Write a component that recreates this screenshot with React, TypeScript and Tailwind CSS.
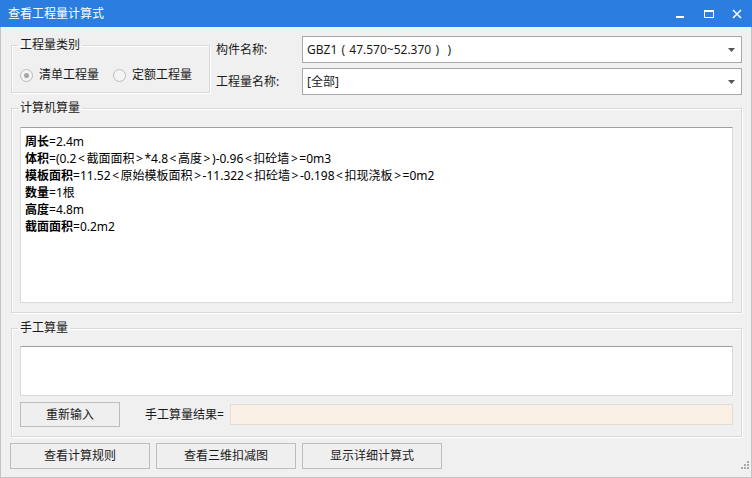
import type { ReactNode } from "react";

function TitleBar() {
  return (
    <div className="flex h-[27px] items-center bg-[#2b7ee0] pl-[8px] text-white">
      <span className="text-[12px] leading-none">查看工程量计算式</span>
      <div className="ml-auto flex items-center">
        <svg viewBox="0 0 12 12" className="mr-[17px] size-[12px]">
          <rect x="2" y="8" width="8" height="2" fill="#fff" />
        </svg>
        <svg viewBox="0 0 12 12" className="mr-[16px] size-[12px]">
          <rect x="1.5" y="2.5" width="9" height="7" fill="none" stroke="#fff" />
          <rect x="1" y="2" width="10" height="2" fill="#fff" />
        </svg>
        <svg viewBox="0 0 12 12" className="mr-[9px] size-[12px]">
          <path d="M2 2l8 8M10 2l-8 8" stroke="#fff" strokeWidth="1.6" />
        </svg>
      </div>
    </div>
  );
}

function Group({
  title,
  className,
  children,
}: {
  title: string;
  className: string;
  children: ReactNode;
}) {
  return (
    <fieldset
      className={`border border-[#d9d9d9] shadow-[inset_1px_1px_0_#ffffff,1px_1px_0_#ffffff] ${className}`}
    >
      <legend className="ml-[6px] px-[2px] text-[12px] leading-[14px]">
        {title}
      </legend>
      {children}
    </fieldset>
  );
}

function Radio({ checked, label }: { checked?: boolean; label: string }) {
  return (
    <label className="flex items-center">
      <span className="flex size-[13px] items-center justify-center rounded-full border border-[#bcbcbc] bg-[#f4f4f4]">
        {checked && <span className="size-[5px] rounded-full bg-[#a6a6a6]" />}
      </span>
      <span className="ml-[6px]">{label}</span>
    </label>
  );
}

// wide, centred punctuation like the dialog's CJK font draws it
function P({ c, w = "w-[12px]" }: { c: string; w?: string }) {
  return <span className={`inline-block text-center ${w}`}>{c}</span>;
}

function Combo({ label, children }: { label: string; children: ReactNode }) {
  return (
    <div className="flex h-[27px] items-center">
      <span className="w-[86px]">{label}</span>
      <div className="flex h-full flex-1 items-center border border-[#a9a9a9] bg-white pl-[4px] pr-[6px]">
        <span>{children}</span>
        <svg viewBox="0 0 7 4" className="ml-auto h-[4px] w-[7px]">
          <path d="M0 0h7L3.5 4z" fill="#555" />
        </svg>
      </div>
    </div>
  );
}

function Button({ label, className }: { label: string; className: string }) {
  return (
    <button
      className={`flex items-center justify-center border border-[#bdbdbd] bg-[#efefef] text-[12px] ${className}`}
    >
      {label}
    </button>
  );
}

function Formula({ text }: { text: string }) {
  // split on angle brackets so they can get the narrow centred box
  const parts = text.split(/([<>])/);
  return (
    <>
      {parts.map((s, i) =>
        s === "<" || s === ">" ? (
          <P key={i} c={s} w="w-[10px]" />
        ) : (
          <span key={i}>{s}</span>
        )
      )}
    </>
  );
}

const lines: [string, string][] = [
  ["周长", "=2.4m"],
  ["体积", "=(0.2<截面面积>*4.8<高度>)-0.96<扣砼墙>=0m3"],
  ["模板面积", "=11.52<原始模板面积>-11.322<扣砼墙>-0.198<扣现浇板>=0m2"],
  ["数量", "=1根"],
  ["高度", "=4.8m"],
  ["截面面积", "=0.2m2"],
];

export default function App() {
  return (
    <div className="flex h-[478px] w-[752px] flex-col bg-[#f0f0f0] font-['Noto_Sans','Noto_Sans_CJK_SC',sans-serif] text-[12px] text-[#1a1a1a]">
      <TitleBar />
      <div className="flex flex-1 flex-col border-x border-b border-[#c4c4c4]">
        <div className="flex items-start">
          <Group title="工程量类别" className="ml-[10px] mt-[11px] h-[55px] w-[199px]">
            <div className="flex items-center gap-[14px] pl-[8px] pt-[14px]">
              <Radio checked label="清单工程量" />
              <Radio label="定额工程量" />
            </div>
          </Group>
          <div className="ml-[6px] mr-[9px] flex flex-1 flex-col gap-[5px] pt-[9px]">
            <Combo label="构件名称:">
              GBZ1
              <P c="(" />
              47.570~52.370
              <P c=")" />
              <P c=")" />
            </Combo>
            <Combo label="工程量名称:">[全部]</Combo>
          </div>
        </div>

        <Group title="计算机算量" className="ml-[10px] mr-[9px] mt-[6px] h-[212px]">
          <div className="mx-[8px] mt-[12px] h-[176px] border border-[#dadada] border-t-[#a0a0a0] bg-white pl-[4px] pt-[5px] leading-[17px] text-black">
            {lines.map(([k, v]) => (
              <div key={k}>
                <span className="font-bold">{k}</span>
                <Formula text={v} />
              </div>
            ))}
          </div>
        </Group>

        <Group title="手工算量" className="ml-[10px] mr-[9px] mt-[8px] h-[116px]">
          <div className="mx-[8px] mt-[11px] h-[50px] border border-[#dadada] border-t-[#a0a0a0] bg-white" />
          <div className="mx-[8px] mt-[6px] flex h-[25px] items-center">
            <Button label="重新输入" className="h-full w-[100px]" />
            <span className="ml-[25px]">手工算量结果=</span>
            <div className="ml-[6px] h-[21px] flex-1 border border-[#e2dcd4] bg-[#faf0e6]" />
          </div>
        </Group>

        <div className="ml-[9px] mt-[6px] flex gap-[6px]">
          <Button label="查看计算规则" className="h-[26px] w-[140px]" />
          <Button label="查看三维扣减图" className="h-[26px] w-[140px]" />
          <Button label="显示详细计算式" className="h-[26px] w-[140px]" />
          <svg viewBox="0 0 10 10" className="ml-auto mr-[1px] mt-[17px] size-[10px]">
            {[
              [7, 1],
              [4, 4],
              [7, 4],
              [1, 7],
              [4, 7],
              [7, 7],
            ].map(([x, y]) => (
              <rect key={`${x}-${y}`} x={x} y={y} width="2" height="2" fill="#a8a8a8" />
            ))}
          </svg>
        </div>
      </div>
    </div>
  );
}
